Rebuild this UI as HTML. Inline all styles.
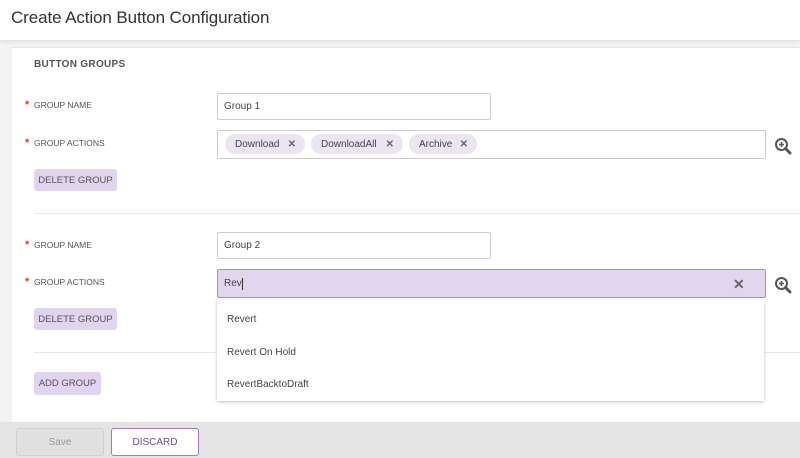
<!DOCTYPE html>
<html><head><meta charset="utf-8">
<style>
*{box-sizing:border-box;margin:0;padding:0}
body{width:800px;height:458px;overflow:hidden;background:#f3f3f3;font-family:"Liberation Sans",sans-serif;position:relative;color:#444}
.hdr{position:absolute;left:0;top:0;width:800px;height:40px;background:#fff;box-shadow:0 2px 4px rgba(0,0,0,.08)}
.hdr h1{position:absolute;left:11px;top:8px;font-size:17px;font-weight:normal;color:#333;letter-spacing:-.1px}
.card{position:absolute;left:12px;top:47px;width:800px;height:380px;background:#fff;border-top:1px solid #e6e6e6}
.abs{position:absolute}
.sec{left:34px;top:59px;font-size:10px;font-weight:bold;color:#555;letter-spacing:.3px}
.lbl{font-size:8.5px;color:#555;left:34px}
.lbl b{color:#e33;position:absolute;left:-9px;top:-1px;font-size:11px}
.inp{border:1px solid #ccc;border-radius:2px;background:#fff;font-size:10px;color:#444;padding-left:6px;display:flex;align-items:center}
.btn{background:#e0d4ef;border-radius:3px;font-size:9.5px;color:#555;display:flex;align-items:center;justify-content:center}
.chip{position:absolute;top:134px;height:20px;border-radius:10px;background:#ebe5f2;font-size:10px;color:#444;display:flex;align-items:center;padding-left:10px}
.chip i{position:absolute;right:9px;font-style:normal;font-size:10px;font-weight:bold;color:#666}
.div{left:34px;width:766px;height:1px;background:#e6e6e6}
.dd{left:217px;top:300px;width:547px;height:101px;background:#fff;box-shadow:0 1px 3px rgba(0,0,0,.25);font-size:10px;color:#444}
.dd div{position:absolute;left:10px}
.foot{left:0;top:422px;width:800px;height:36px;background:#e4e4e4}
</style></head><body>
<div class="hdr"><h1>Create Action Button Configuration</h1></div>
<div class="card"></div>
<div class="abs sec">BUTTON GROUPS</div>

<div class="abs lbl" style="top:100px"><b>*</b>GROUP NAME</div>
<div class="abs inp" style="left:217px;top:93px;width:274px;height:27px">Group 1</div>
<div class="abs lbl" style="top:138px"><b>*</b>GROUP ACTIONS</div>
<div class="abs inp" style="left:217px;top:130px;width:549px;height:29px"></div>
<div class="chip" style="left:225px;width:80px">Download<i>✕</i></div>
<div class="chip" style="left:311px;width:92px">DownloadAll<i>✕</i></div>
<div class="chip" style="left:409px;width:68px">Archive<i>✕</i></div>
<svg class="abs" style="left:774px;top:137px" width="18" height="18" viewBox="0 0 18 18"><circle cx="7.5" cy="7.5" r="5.5" fill="none" stroke="#555" stroke-width="2"/><path d="M11.5 11.5L16 16" stroke="#555" stroke-width="3" stroke-linecap="round"/><path d="M7.5 5v5M5 7.5h5" stroke="#555" stroke-width="1.6"/></svg>
<div class="abs btn" style="left:34px;top:169px;width:83px;height:22px">DELETE GROUP</div>

<div class="abs div" style="top:213px"></div>

<div class="abs lbl" style="top:240px"><b>*</b>GROUP NAME</div>
<div class="abs inp" style="left:217px;top:232px;width:274px;height:27px">Group 2</div>
<div class="abs lbl" style="top:277px"><b>*</b>GROUP ACTIONS</div>
<div class="abs inp" style="left:217px;top:269px;width:549px;height:29px;background:#e2d6ef;border-color:#a68cc9">Rev<span style="display:inline-block;width:1px;height:12px;background:#333"></span></div>
<div class="abs" style="left:733px;top:276px;font-size:14px;font-weight:bold;color:#666">✕</div>
<svg class="abs" style="left:774px;top:276px" width="18" height="18" viewBox="0 0 18 18"><circle cx="7.5" cy="7.5" r="5.5" fill="none" stroke="#555" stroke-width="2"/><path d="M11.5 11.5L16 16" stroke="#555" stroke-width="3" stroke-linecap="round"/><path d="M7.5 5v5M5 7.5h5" stroke="#555" stroke-width="1.6"/></svg>
<div class="abs btn" style="left:34px;top:308px;width:83px;height:22px">DELETE GROUP</div>

<div class="abs div" style="top:352px"></div>
<div class="abs btn" style="left:34px;top:372px;width:67px;height:23px">ADD GROUP</div>

<div class="abs dd">
<div style="top:14px">Revert</div>
<div style="top:47px">Revert On Hold</div>
<div style="top:79px">RevertBacktoDraft</div>
</div>

<div class="abs foot"></div>
<div class="abs" style="left:16px;top:428px;width:88px;height:28px;background:#e0e0e0;border:1px solid #d0d0d0;border-radius:3px;font-size:10px;color:#999;display:flex;align-items:center;justify-content:center">Save</div>
<div class="abs" style="left:111px;top:428px;width:88px;height:28px;background:#fff;border:1px solid #9e7cc6;border-radius:3px;font-size:10px;color:#6a4a96;display:flex;align-items:center;justify-content:center">DISCARD</div>
</body></html>
